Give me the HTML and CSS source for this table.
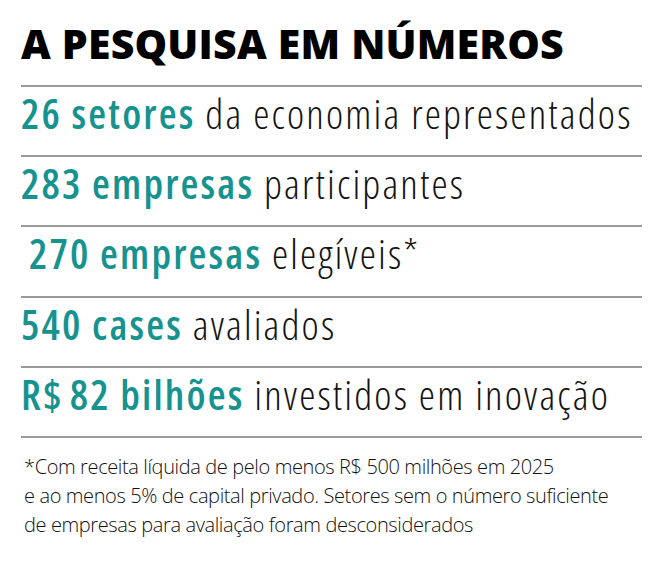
FILE: index.html
```html
<!DOCTYPE html>
<html lang="pt-BR">
<head>
<meta charset="utf-8">
<title>A pesquisa em números</title>
<link rel="stylesheet" href="styles.css">
</head>
<body>
<main class="box">
  <h1 class="title">A PESQUISA EM NÚMEROS</h1>
  <ul class="stats">
    <li class="stat"><span class="num">26 setores</span> da economia representados</li>
    <li class="stat"><span class="num">283 empresas</span> participantes</li>
    <li class="stat stat--indent"><span class="num">270 empresas</span> elegíveis*</li>
    <li class="stat"><span class="num">540 cases</span> avaliados</li>
    <li class="stat"><span class="num">R$&#8202;82 bilhões</span> investidos em inovação</li>
  </ul>
  <p class="note">*Com receita líquida de pelo menos R$ 500 milhões em 2025<br>e ao menos 5% de capital privado. Setores sem o número suficiente<br>de empresas para avaliação foram desconsiderados</p>
</main>
</body>
</html>
```
FILE: styles.css
```css
html, body {
  margin: 0;
  padding: 0;
  background: #ffffff;
}
.box {
  width: 621px;
  margin-left: 21px;
  font-family: "Open Sans", "Roboto", sans-serif;
  color: #141414;
}
.title {
  margin: 0;
  height: 85px;
  box-sizing: border-box;
  padding-top: 19px;
  font-size: 41px;
  line-height: 48px;
  font-weight: 800;
  font-stretch: 93%;
  letter-spacing: 0.2px;
  color: #000;
  white-space: nowrap;
}
.stats {
  list-style: none;
  margin: 0;
  padding: 0;
  border-bottom: 2px solid #9a9a9a;
}
.stat {
  height: 70.2px;
  box-sizing: border-box;
  border-top: 2px solid #9a9a9a;
  padding-top: 2px;
  font-size: 41px;
  line-height: 48px;
  font-weight: 300;
  font-stretch: 75%;
  letter-spacing: 2.15px;
  white-space: nowrap;
}
.stat--indent {
  padding-left: 8px;
}
.num {
  color: #16928f;
  font-weight: 600;
}
.note {
  margin: 0;
  padding-top: 14px;
  padding-left: 3px;
  font-size: 20px;
  line-height: 29px;
  font-weight: 300;
  font-stretch: 93%;
  letter-spacing: -0.38px;
  color: #111;
  white-space: nowrap;
}
```
